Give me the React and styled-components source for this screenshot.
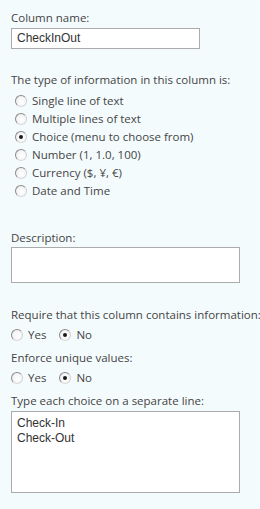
import React from "react";
import styled, { createGlobalStyle } from "styled-components";

const Global = createGlobalStyle`
  html, body { margin: 0; padding: 0; background: #f4fbfd; }
  body { font-family: "Open Sans", "Noto Sans", sans-serif; }
`;

const Page = styled.div`
  width: 260px;
  height: 509px;
  padding: 9px 0 0 11px;
  box-sizing: border-box;
  color: #444;
  font-size: 11.5px;
  background: #f4fbfd;
`;

const Label = styled.div`
  height: 18px;
  line-height: 18px;
  margin-top: ${(p) => p.$mt || 0}px;
  white-space: nowrap;
`;

const TextBox = styled.div`
  box-sizing: border-box;
  width: ${(p) => p.$w}px;
  height: ${(p) => p.$h}px;
  margin-top: ${(p) => p.$mt || 0}px;
  background: #fff;
  border: 1px solid #ababab;
  font-family: "Liberation Sans", Arial, sans-serif;
  font-size: 12px;
  color: #333;
  padding: ${(p) => p.$pad || "0 5px"};
  line-height: ${(p) => p.$lh || "18px"};
  white-space: pre;
`;

const OptionList = styled.div`
  display: flex;
  flex-direction: column;
  margin-top: 3px;
  padding-left: 4px;
`;

const InlineOptions = styled.div`
  display: flex;
  gap: 13px;
  margin-top: 2px;
`;

const Option = styled.label`
  display: flex;
  align-items: center;
  gap: 5px;
  height: 18px;
  line-height: 18px;
  white-space: nowrap;
`;

const Radio = styled.span`
  position: relative;
  box-sizing: border-box;
  width: 12px;
  height: 12px;
  border-radius: 50%;
  border: 1px solid #8a8a8a;
  border-right-color: #cfcfcf;
  border-bottom-color: #d8d8d8;
  background: radial-gradient(circle at 60% 60%, #ffffff 0%, #f2f2f2 70%, #dcdcdc 100%);
  flex-shrink: 0;
  &::after {
    content: "";
    display: ${(p) => (p.$checked ? "block" : "none")};
    position: absolute;
    left: 3px;
    top: 3px;
    width: 4px;
    height: 4px;
    border-radius: 50%;
    background: #1a1a1a;
  }
`;

const RadioOption = ({ checked, children }) => (
  <Option>
    <Radio $checked={checked} />
    <span>{children}</span>
  </Option>
);

export default function App() {
  return (
    <>
      <Global />
      <Page>
        <Label>Column name:</Label>
        <TextBox $w={189} $h={21} $mt={1}>CheckInOut</TextBox>

        <Label $mt={22}>The type of information in this column is:</Label>
        <OptionList>
          <RadioOption>Single line of text</RadioOption>
          <RadioOption>Multiple lines of text</RadioOption>
          <RadioOption checked>Choice (menu to choose from)</RadioOption>
          <RadioOption>Number (1, 1.0, 100)</RadioOption>
          <RadioOption>Currency ($, ¥, €)</RadioOption>
          <RadioOption>Date and Time</RadioOption>
        </OptionList>

        <Label $mt={29}>Description:</Label>
        <TextBox $w={229} $h={36} />

        <Label $mt={23}>Require that this column contains information:</Label>
        <InlineOptions>
          <RadioOption>Yes</RadioOption>
          <RadioOption checked>No</RadioOption>
        </InlineOptions>

        <Label $mt={5}>Enforce unique values:</Label>
        <InlineOptions>
          <RadioOption>Yes</RadioOption>
          <RadioOption checked>No</RadioOption>
        </InlineOptions>

        <Label $mt={5}>Type each choice on a separate line:</Label>
        <TextBox $w={229} $h={82} $mt={1} $pad="4px 5px" $lh="15px">
          {"Check-In\nCheck-Out"}
        </TextBox>
      </Page>
    </>
  );
}
